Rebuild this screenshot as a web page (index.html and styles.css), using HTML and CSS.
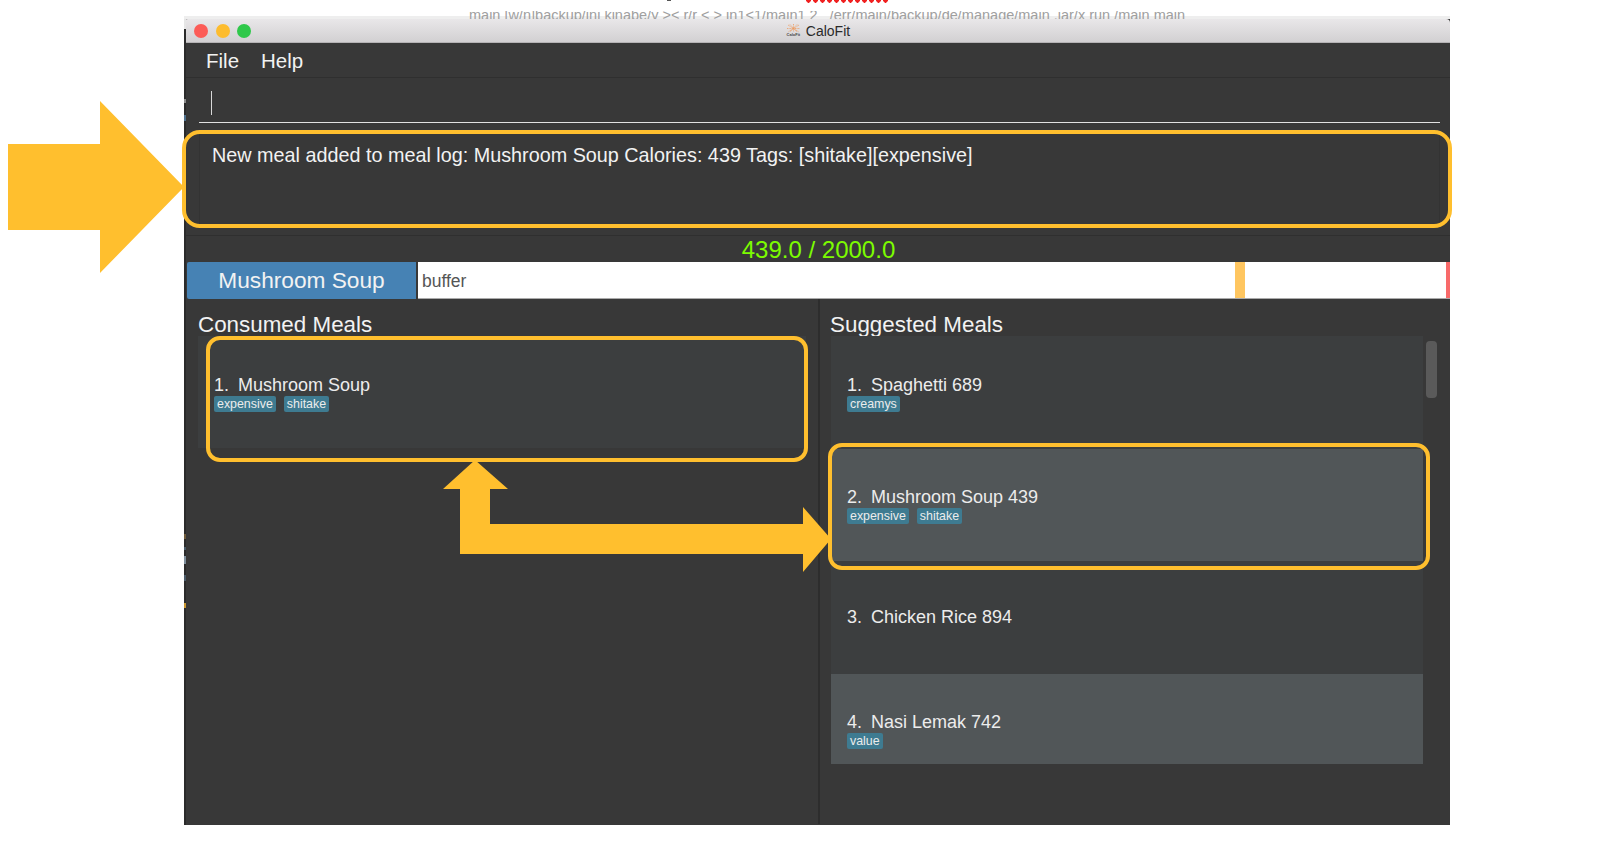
FILE: index.html
```html
<!DOCTYPE html>
<html lang="en">
<head>
  <meta charset="utf-8" />
  <title>CaloFit</title>
  <link rel="stylesheet" href="styles.css">
</head>
<body>
  <div class="page">
    <div class="backdrop">
      <div class="top-marks">
        <span class="tick"></span>
        <span class="squiggle"></span>
      </div>
      <p class="behind">main [w/n]backup/ini kinabe/y &gt;&lt; r/r &lt; &gt; in1&lt;1/main1 2 &nbsp; /err/main/backup/de/manage/main .jar/x run /main main</p>
    </div>

    <div class="window">
      <header class="titlebar">
        <div class="lights">
          <span class="light red"></span>
          <span class="light amber"></span>
          <span class="light green"></span>
        </div>
        <div class="title">
          <span class="logo">
            <svg width="15" height="9" viewBox="0 0 15 9">
              <g stroke="#ee9a5e" stroke-width="0.8" stroke-dasharray="1 0.6" fill="none">
                <path d="M2 1 L13 8 M13 1 L2 8 M7.5 0 V8 M1 4.5 H14 M4 0.5 L11 8 M11 0.5 L4 8" />
              </g>
            </svg>
            <span class="logo-text">CaloFit</span>
          </span>
          <span>CaloFit</span>
        </div>
      </header>

      <nav class="menubar">
        <span>File</span>
        <span>Help</span>
      </nav>

      <div class="command">
        <div class="command-input"><span class="caret"></span></div>
      </div>

      <div class="result">
        <div class="result-inner">New meal added to meal log: Mushroom Soup Calories: 439 Tags: [shitake][expensive]</div>
      </div>

      <div class="calories">439.0 / 2000.0</div>

      <div class="timeline">
        <div class="meal-block">Mushroom Soup</div>
        <div class="track">
          <span class="buffer">buffer</span>
          <span class="mark-amber"></span>
          <span class="mark-red"></span>
        </div>
      </div>

      <div class="panes">
        <section class="pane pane-left">
          <h2>Consumed Meals</h2>
          <div class="list list-short">
            <div class="row">
              <div class="row-name"><span class="num">1.</span>Mushroom Soup</div>
              <div class="tags"><span class="tag">expensive</span><span class="tag">shitake</span></div>
            </div>
          </div>
        </section>

        <section class="pane pane-right">
          <h2>Suggested Meals</h2>
          <div class="list-wrap">
            <div class="list list-tall">
              <div class="row">
                <div class="row-name"><span class="num">1.</span>Spaghetti 689</div>
                <div class="tags"><span class="tag">creamys</span></div>
              </div>
              <div class="row row-alt">
                <div class="row-name"><span class="num">2.</span>Mushroom Soup 439</div>
                <div class="tags"><span class="tag">expensive</span><span class="tag">shitake</span></div>
              </div>
              <div class="row">
                <div class="row-name"><span class="num">3.</span>Chicken Rice 894</div>
              </div>
              <div class="row row-alt">
                <div class="row-name"><span class="num">4.</span>Nasi Lemak 742</div>
                <div class="tags"><span class="tag">value</span></div>
              </div>
            </div>
            <div class="scrollbar"><span class="thumb"></span></div>
          </div>
        </section>
      </div>
    </div>

    <!-- sliver of the window behind, lies over the app's left edge -->
    <div class="edge"></div>

    <!-- annotations drawn on top of the screenshot -->
    <svg class="notes" width="1622" height="848" viewBox="0 0 1622 848">
      <path class="fill" d="M8 144 H100 V101 L184 187 L100 273 V230 H8 Z" />
      <path class="fill" d="M475 460 L508 489 H490 V524 H803 V507 L831 539 L803 572 V554 H460 V489 H443 Z" />
      <rect class="box" x="184" y="132" width="1266" height="94" rx="16" />
      <rect class="box" x="208" y="338" width="598" height="122" rx="12" />
      <rect class="box" x="830" y="445" width="598" height="123" rx="12" />
    </svg>
  </div>
</body>
</html>
```

FILE: styles.css
```css
* {
  box-sizing: border-box;
}
html, body {
  margin: 0;
  background: #fff;
}
body {
  font-family: "Liberation Sans", Arial, sans-serif;
  color: #f2f2f2;
}
.page {
  position: relative;
  width: 1622px;
  height: 848px;
  padding-left: 184px;
  overflow: hidden;
}

/* what shows behind the app window */
.backdrop {
  height: 19px;
  width: 1266px;
  overflow: hidden;
  background: linear-gradient(transparent 16px, #eeeeee 16px);
}
.top-marks {
  display: flex;
  height: 3px;
  padding-left: 483px;
}
.tick {
  width: 4px;
  height: 1px;
  background: #555;
}
.squiggle {
  width: 85px;
  height: 3px;
  margin-left: 134px;
  background: radial-gradient(circle at 3.5px 0.5px, #f02020 2px, transparent 2.4px) 0 0 / 7px 3px repeat-x;
}
.behind {
  margin: 8px 0 0 285px;
  height: 8px;
  font-size: 14.5px;
  line-height: 8px;
  color: #a0a0a0;
  white-space: nowrap;
  overflow: hidden;
}

.window {
  width: 1266px;
  height: 806px;
  background: #383838;
}
.edge {
  position: absolute;
  left: 184px;
  top: 19px;
  width: 2px;
  height: 806px;
  background: linear-gradient(#e6e6e6 0 10px, #2b2b2b 10px 80px, #8c8c8c 80px 84px, #2b2b2b 84px 96px,
    #4d6f8c 96px 102px, #2b2b2b 102px 515px, #6e5a3a 515px 520px, #2b2b2b 520px 528px, #4a5c6a 528px 531px,
    #2b2b2b 531px 537px, #7f8f9c 537px 545px, #2b2b2b 545px 556px, #4a5a68 556px 562px, #2b2b2b 562px 584px,
    #c9962e 584px 589px, #2b2b2b 589px);
}
.titlebar {
  position: relative;
  height: 24px;
  display: flex;
  align-items: center;
  justify-content: center;
  background: linear-gradient(#e9e7e9, #d2d0d2);
  border-bottom: 1px solid #b5b3b5;
  border-radius: 4px 4px 0 0;
  color: #2a2a2a;
  font-size: 14px;
}
.lights {
  position: absolute;
  left: 10px;
  top: 5px;
  display: flex;
  gap: 7.5px;
}
.light {
  width: 14px;
  height: 14px;
  border-radius: 50%;
}
.light.red { background: #fc5c57; }
.light.amber { background: #fdbc2e; }
.light.green { background: #2fc84a; }
.title {
  display: flex;
  align-items: center;
  gap: 5px;
  margin-left: 2px;
}
.logo {
  display: flex;
  flex-direction: column;
  align-items: center;
  line-height: 1;
}
.logo-text {
  font-size: 4px;
  font-weight: bold;
  color: #444;
}

.menubar {
  height: 35px;
  display: flex;
  align-items: center;
  gap: 22px;
  padding: 2px 0 0 22px;
  border-bottom: 1px solid #2f2f2f;
  font-size: 20.5px;
}
.command {
  height: 50px;
  padding: 0 10px 0 15px;
}
.command-input {
  height: 45px;
  padding: 13px 0 0 12px;
  border-bottom: 1px solid #e0e0e0;
}
.caret {
  display: block;
  width: 1px;
  height: 24px;
  background: #d8d8d8;
}
.result {
  height: 108px;
  padding: 5px 10px 0 15px;
  border-bottom: 1px solid #2f2f2f;
}
.result-inner {
  height: 95px;
  padding: 10px 12px;
  border: 1px solid #333;
  font-size: 19.8px;
}
.calories {
  height: 26px;
  padding-left: 3px;
  text-align: center;
  font-size: 24px;
  line-height: 28px;
  color: #7cfc00;
}
.timeline {
  height: 37px;
  display: flex;
  padding-left: 3px;
}
.meal-block {
  width: 229px;
  display: flex;
  align-items: center;
  justify-content: center;
  background: #4682b4;
  border-radius: 2px 0 0 2px;
  font-size: 22.7px;
}
.track {
  flex: 1;
  position: relative;
  margin-left: 2px;
  padding-left: 4px;
  background: #fff;
  border-bottom: 1px solid #aaa;
  color: #555;
  font-size: 17.5px;
  line-height: 38px;
}
.mark-amber {
  position: absolute;
  left: 817px;
  top: 0;
  bottom: 0;
  width: 10px;
  background: #ffc660;
}
.mark-red {
  position: absolute;
  right: 0;
  top: 0;
  bottom: 0;
  width: 4px;
  background: #f86a6a;
}

.panes {
  display: flex;
  height: 525px;
}
.pane {
  height: 100%;
}
.pane-left {
  width: 636px;
  padding-left: 14px;
  border-right: 2px solid #2d2d2d;
}
.pane-right {
  flex: 1;
  padding-left: 11px;
}
.pane h2 {
  margin: 0;
  height: 37px;
  font-size: 22.4px;
  font-weight: normal;
  line-height: 28px;
  padding-top: 12px;
}
.pane-right h2 {
  margin-left: -1px;
}
.list-wrap {
  display: flex;
}
.list {
  background: #3c3e3f;
  overflow: hidden;
}
.list-short {
  width: 608px;
  height: 112px;
}
.list-tall {
  width: 592px;
  height: 428px;
}
.row {
  height: 112.5px;
  display: flex;
  flex-direction: column;
  justify-content: center;
  padding-left: 16px;
}
.row-alt {
  background: #515658;
}
.row-name {
  font-size: 18px;
  line-height: 24px;
  color: #ececec;
}
.num {
  margin-right: 9px;
}
.tags {
  display: flex;
  gap: 8px;
  height: 16px;
  margin-top: -1px;
}
.tag {
  padding: 0 3px;
  border-radius: 2px;
  background: #3e7b91;
  font-size: 12.4px;
  line-height: 16px;
  color: #ececec;
}
.scrollbar {
  width: 14px;
  padding: 5px 0 0 3px;
}
.thumb {
  display: block;
  width: 11px;
  height: 57px;
  border-radius: 4px;
  background: #5a5a5a;
}

.notes {
  position: absolute;
  left: 0;
  top: 0;
}
.notes .fill {
  fill: #ffbf2e;
}
.notes .box {
  fill: none;
  stroke: #ffbf2e;
  stroke-width: 4;
}
```
